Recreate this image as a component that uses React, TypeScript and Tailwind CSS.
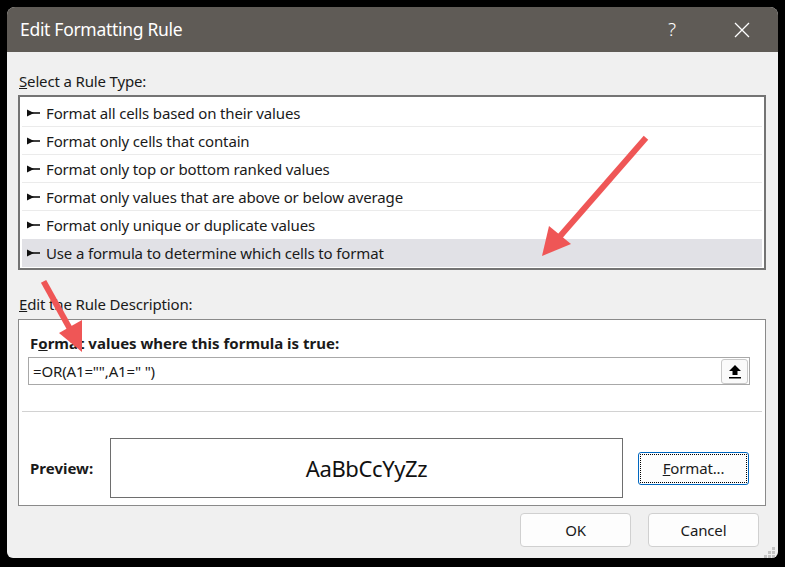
import React from 'react';

const FONT = { fontFamily: '"Noto Sans", "Open Sans", sans-serif' };

const ruleTypes = [
  'Format all cells based on their values',
  'Format only cells that contain',
  'Format only top or bottom ranked values',
  'Format only values that are above or below average',
  'Format only unique or duplicate values',
  'Use a formula to determine which cells to format',
];

const SELECTED = 5;

const RowMarker: React.FC = () => (
  <svg width="14" height="8" viewBox="0 0 14 8" className="shrink-0">
    <polygon points="0,0.5 7,4 0,7.5" fill="#111" />
    <rect x="0" y="3.2" width="13" height="1.6" fill="#111" />
  </svg>
);

const App: React.FC = () => {
  return (
    <div className="w-[785px] h-[567px] bg-black pt-[7px] pl-[7px] overflow-hidden relative" style={FONT}>
      <div className="w-[771px] h-[551px] bg-[#f0f0f0] rounded-t-[8px] rounded-b-[6px] flex flex-col overflow-hidden text-[15px] tracking-[-0.15px] text-[#1a1a1a]">
        {/* Title bar */}
        <div className="h-[45px] bg-[#5f5b56] flex items-center pl-[13px] pr-[28px] shrink-0">
          <span className="text-white text-[17.5px] tracking-[-0.3px]">Edit Formatting Rule</span>
          <span className="ml-auto text-white text-[19px] font-light mr-[58px]">?</span>
          <svg width="16" height="16" viewBox="0 0 16 16">
            <path d="M1 1 L15 15 M15 1 L1 15" stroke="#fff" strokeWidth="1.3" />
          </svg>
        </div>

        {/* Body */}
        <div className="flex flex-col pl-[11px] pr-[12px]">
          <div className="h-[43px] flex items-end pb-[6px] pl-[1px] leading-none">
            <span><span className="underline">S</span>elect a Rule Type:</span>
          </div>

          <div className="border-2 border-[#747474] bg-white p-[2px] h-[175px]">
            {ruleTypes.map((rt, i) => (
              <div
                key={rt}
                className={`h-[28px] flex items-center gap-[5px] pl-[5px] ${
                  i === SELECTED ? 'bg-[#e1e1e6]' : ''
                } ${i < ruleTypes.length - 2 ? 'border-b border-[#ebebeb]' : ''}`}
              >
                <RowMarker />
                <span className="whitespace-nowrap pt-[1px]">{rt}</span>
              </div>
            ))}
          </div>

          <div className="h-[49px] flex items-end pb-[7px] pl-[1px] leading-none">
            <span><span className="underline">E</span>dit the Rule Description:</span>
          </div>

          <div className="border border-[#8a8a8a] bg-white h-[187px] flex flex-col px-[9px]">
            <div className="h-[37px] flex items-end pb-[6px] pl-[2px] font-bold tracking-normal leading-none">
              <span>F<span className="underline">o</span>rmat values where this formula is true:</span>
            </div>
            <div className="h-[28px] mr-[6px] border border-[#a8a8a8] flex items-center pl-[4px] pr-[1px]">
              <span className="whitespace-pre">=OR(A1="",A1=" ")</span>
              <div className="ml-auto w-[27px] h-[25px] border border-[#c8c8c8] rounded-[3px] bg-[#fafafa] flex items-center justify-center">
                <svg width="14" height="15" viewBox="0 0 14 15">
                  <polygon points="7,1 13,7 9.5,7 9.5,11 4.5,11 4.5,7 1,7" fill="#000" />
                  <rect x="1" y="13" width="12" height="1.5" fill="#000" />
                </svg>
              </div>
            </div>
            <div className="mt-[26px] -mx-[6px] border-t border-[#d2d2d2]" />
            <div className="flex items-center mt-[26px]">
              <span className="font-bold tracking-normal w-[82px] pl-[2px]">Preview:</span>
              <div className="w-[513px] h-[60px] border border-[#6e6e6e] flex items-center justify-center">
                <span className="text-[22px] text-[#111] tracking-[-0.4px]">AaBbCcYyZz</span>
              </div>
              <button className="ml-[15px] w-[111px] h-[33px] border border-[#0067c0] rounded-[3px] bg-[#fdfdfd] p-[1px]">
                <span className="w-full h-full border border-dotted border-black flex items-center justify-center rounded-[1px]">
                  <span><span className="underline">F</span>ormat...</span>
                </span>
              </button>
            </div>
          </div>

          <div className="flex justify-end gap-[17px] mt-[7px] pr-[7px]">
            <button className="w-[111px] h-[34px] border border-[#d0d0d0] rounded-[4px] bg-[#fdfdfd]">OK</button>
            <button className="w-[111px] h-[34px] border border-[#d0d0d0] rounded-[4px] bg-[#fdfdfd]">Cancel</button>
          </div>
        </div>

        {/* Resize grip */}
        <div className="mt-auto self-end mr-[2px] mb-[2px]">
          <svg width="12" height="12" viewBox="0 0 12 12">
            {[[8, 0], [4, 4], [8, 4], [0, 8], [4, 8], [8, 8]].map(([x, y]) => (
              <rect key={`${x}-${y}`} x={x} y={y} width="3" height="3" fill="#c4c4c4" />
            ))}
          </svg>
        </div>
      </div>

      {/* Red annotation arrows */}
      <svg className="absolute inset-0 pointer-events-none" width="785" height="567">
        <line x1="644" y1="140" x2="555" y2="242" stroke="#ef5656" strokeWidth="6" strokeLinecap="square" />
        <polygon points="542,256 549,226 571,244" fill="#ef5656" />
        <line x1="45" y1="284" x2="75" y2="338" stroke="#ef5656" strokeWidth="6" strokeLinecap="square" />
        <polygon points="82,352 59,333 82,320" fill="#ef5656" />
      </svg>
    </div>
  );
};

export default App;
